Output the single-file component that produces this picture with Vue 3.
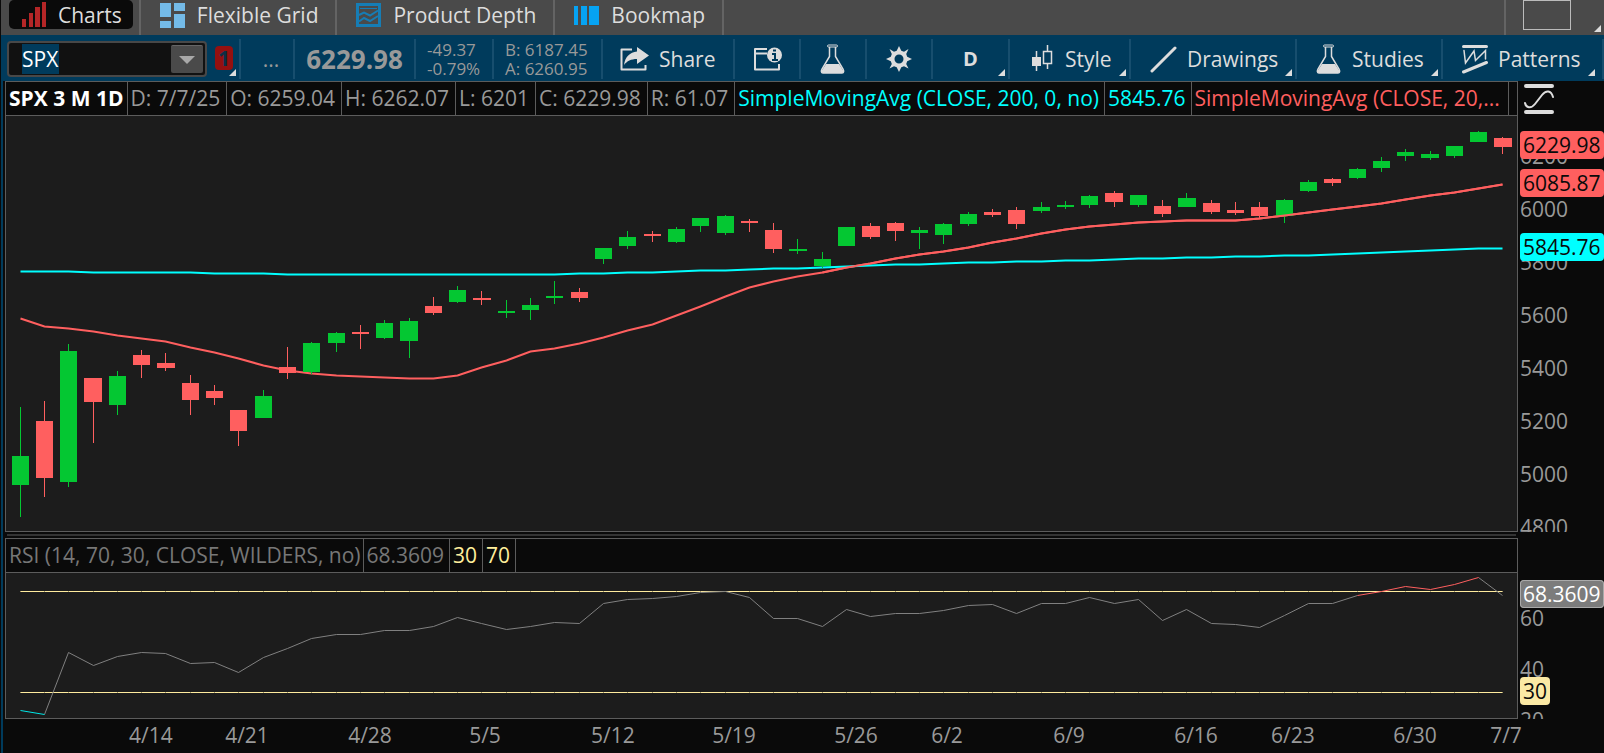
<script setup>
import { ref } from 'vue'

const symbol = ref('SPX')

const studies = [
  { text: 'SPX 3 M 1D', tone: 'title' },
  { text: 'D: 7/7/25', tone: 'muted' },
  { text: 'O: 6259.04', tone: 'muted' },
  { text: 'H: 6262.07', tone: 'muted' },
  { text: 'L: 6201', tone: 'muted' },
  { text: 'C: 6229.98', tone: 'muted' },
  { text: 'R: 61.07', tone: 'muted' },
  { text: 'SimpleMovingAvg (CLOSE, 200, 0, no)', tone: 'cyan' },
  { text: '5845.76', tone: 'cyan' },
  { text: 'SimpleMovingAvg (CLOSE, 20,...', tone: 'red' }
]
const rsiCells = [
  { text: 'RSI (14, 70, 30, CLOSE, WILDERS, no)', tone: 'dim name' },
  { text: '68.3609', tone: 'dim' },
  { text: '30', tone: 'sand' },
  { text: '70', tone: 'sand' }
]

// Plot areas in chart units
const W = 1511
const PRICE_H = 415
const RSI_H = 145
const PRICE_TOP = 116
const RSI_TOP = 573

const xReal = (i) => 14.1 + i * 24.309
const xMid = (i) => Math.floor(xReal(i)) + 0.5

// [direction, body top, body bottom, high, low]
const bars = [
  ['u', 456, 485, 407, 517], ['d', 421, 478, 401, 497], ['u', 351, 482, 344, 487], ['d', 378, 402, 378, 443],
  ['u', 376, 405, 371, 415], ['d', 355, 365, 350, 378], ['d', 363, 368, 353, 371], ['d', 383, 400, 375, 415],
  ['d', 391, 398, 385, 405], ['d', 410, 431, 410, 446], ['u', 396, 418, 390, 418], ['d', 367, 373, 347, 379],
  ['u', 343, 372, 342, 374], ['u', 333, 343, 332, 352], ['d', 332, 334, 325, 349], ['u', 323, 338, 320, 339],
  ['u', 321, 341, 318, 358], ['d', 306, 313, 297, 315], ['u', 290, 302, 286, 303], ['d', 298, 300, 291, 305],
  ['u', 311, 313, 300, 318], ['u', 305, 310, 298, 320], ['u', 296, 298, 281, 304], ['d', 292, 298, 288, 302],
  ['u', 248, 259, 248, 264], ['u', 237, 246, 231, 249], ['d', 234, 236, 231, 242], ['u', 229, 242, 227, 243],
  ['u', 218, 226, 218, 232], ['u', 216, 233, 215, 235], ['d', 221, 223, 219, 232], ['d', 230, 249, 223, 253],
  ['u', 249, 251, 239, 254], ['u', 259, 266, 252, 268], ['u', 227, 246, 227, 246], ['d', 226, 237, 223, 239],
  ['d', 223, 231, 222, 241], ['u', 230, 233, 227, 249], ['u', 224, 235, 223, 244], ['u', 214, 224, 212, 226],
  ['d', 212, 215, 209, 217], ['d', 210, 224, 207, 229], ['u', 207, 211, 202, 213], ['u', 205, 207, 201, 209],
  ['u', 196, 205, 195, 208], ['d', 193, 202, 191, 207], ['u', 195, 205, 195, 207], ['d', 206, 214, 200, 217],
  ['u', 198, 207, 193, 207], ['d', 203, 212, 200, 214], ['d', 210, 213, 202, 215], ['d', 207, 216, 202, 219],
  ['u', 200, 216, 199, 223], ['u', 182, 191, 180, 192], ['d', 179, 183, 178, 186], ['u', 169, 178, 168, 179],
  ['u', 161, 168, 157, 172], ['u', 152, 156, 149, 161], ['u', 154, 158, 151, 160], ['u', 146, 156, 146, 158],
  ['u', 132, 142, 131, 142], ['d', 138, 147, 137, 154]
]
const candles = bars.map(([dir, top, bottom, high, low], i) => {
  const left = Math.floor(xReal(i) - 8.06)
  return {
    dir,
    x: left,
    w: Math.floor(xReal(i) + 9.1) - left,
    wick: xMid(i) - 0.5,
    y: top - PRICE_TOP,
    h: bottom - top,
    wy: high - PRICE_TOP,
    wh: low - high
  }
})

const sma20 = [
  318, 326, 328, 331, 335, 338, 341, 347, 352, 358, 365, 370, 373, 375, 376, 377, 378, 378, 375, 367, 360, 351,
  348, 343, 337, 330, 324, 315, 306, 296, 287, 281, 276, 272, 267, 263, 258, 254, 251, 247, 242, 238, 233, 229,
  226, 224, 222, 221, 220, 220, 220, 218, 215, 212, 209, 206, 203, 199, 195, 192, 188, 184
]
const sma200 = [
  271, 271, 271, 272, 272, 272, 272, 272, 273, 273, 273, 274, 274, 274, 274, 274, 274, 274, 274, 274, 274, 274,
  274, 273, 273, 272, 272, 271, 270, 270, 269, 268, 268, 267, 266, 265, 264, 264, 263, 262, 262, 261, 261, 260,
  260, 259, 258, 258, 257, 257, 256, 256, 255, 255, 254, 253, 252, 251, 250, 249, 248, 248
]
const rsi = [
  710, 714, 652, 665, 656, 652, 653, 663, 662, 672, 657, 648, 638, 634, 634, 630, 630, 626, 617, 623, 629, 626,
  622, 623, 603, 599, 598, 596, 592, 591, 597, 618, 618, 626, 609, 616, 613, 613, 610, 605, 604, 613, 603, 603,
  597, 603, 599, 620, 609, 623, 624, 627, 615, 603, 603, 595, 591, 586, 589, 584, 577, 595
]
const line = (ys, top, from = 0, to = ys.length - 1) =>
  ys.slice(from, to + 1).map((y, k) => `${xMid(from + k)},${y + 0.5 - top}`).join(' ')

const lastX = xMid(61)
const notches = bars.map((_, i) => `M${xMid(i)} 18v1M${xMid(i)} 119v1`).join('')

const pct = (value, total) => `${(value / total) * 100}%`
const priceTicks = [
  ['6200', 156], ['6000', 209], ['5800', 262], ['5600', 315], ['5400', 368], ['5200', 421], ['5000', 474], ['4800', 527]
].map(([text, y]) => ({ text, top: pct(y - 81, 451) }))
const priceTags = [
  ['6229.98', 145, 'red'], ['6085.87', 183, 'red'], ['5845.76', 247, 'cyan']
].map(([text, y, tone]) => ({ text, tone, top: pct(y - 81, 451) }))
const rsiTicks = [['60', 618], ['40', 669], ['20', 720]].map(([text, y]) => ({ text, top: pct(y - 538, 181) }))
const rsiTags = [['68.3609', 594, 'gray'], ['30', 691, 'sand']].map(([text, y, tone]) => ({
  text, tone, top: pct(y - 538, 181)
}))
const dates = [
  ['4/14', 151], ['4/21', 247], ['4/28', 370], ['5/5', 485], ['5/12', 613], ['5/19', 734], ['5/26', 856],
  ['6/2', 947], ['6/9', 1069], ['6/16', 1196], ['6/23', 1293], ['6/30', 1415], ['7/7', 1506]
].map(([text, x]) => ({ text, left: pct(x - 6, W) }))
</script>

<template>
  <div class="app">
    <nav class="tabs">
      <div class="tab-slot first">
        <button class="tab active" type="button">
          <svg width="24" height="25" viewBox="0 0 24 25" aria-hidden="true">
            <path d="M0 17h4v8H0zM7 11h4v14H7zM13 5h5v20h-5zM20 0h4v25h-4z" fill="#b52627" />
          </svg>
          Charts
        </button>
      </div>
      <div class="tab-slot">
        <button class="tab" type="button">
          <svg width="25" height="25" viewBox="0 0 25 25" aria-hidden="true">
            <path d="M0 0h11v14H0zM0 18h11v7H0zM14 0h11v8H14zM14 11h11v14H14z" fill="#74bbe8" />
          </svg>
          Flexible Grid
        </button>
      </div>
      <div class="tab-slot">
        <button class="tab" type="button">
          <svg width="25" height="24" viewBox="0 0 25 24" fill="none" stroke="#167db5" aria-hidden="true">
            <rect x="1.5" y="1.5" width="22" height="21" stroke-width="3" />
            <path d="M4 5.5h17" stroke-width="1" />
            <path d="M3 12l5-2.5 6 3 8-5M3 18.500l5-3.500 6 3 8-5" stroke-width="2" />
          </svg>
          Product Depth
        </button>
      </div>
      <div class="tab-slot">
        <button class="tab" type="button">
          <svg width="25" height="19" viewBox="0 0 25 19" aria-hidden="true">
            <path d="M0 0h4v19H0zM7 0h6v19H7zM15 0h10v19H15z" fill="#06a3f3" />
          </svg>
          Bookmap
        </button>
      </div>
      <div class="tab-tools">
        <button class="swatch" type="button" aria-label="Layout"></button>
        <i class="corner"></i>
      </div>
    </nav>

    <div class="toolbar">
      <div class="cell symbol-cell">
        <div class="combo">
          <input v-model="symbol" class="symbol" type="text" aria-label="Symbol" />
          <button class="drop" type="button" aria-label="Choose symbol">
            <svg width="16" height="8" viewBox="0 0 16 8"><path d="M0 0h16l-8 8z" fill="#a8a8a8" /></svg>
          </button>
        </div>
        <button class="badge" type="button">1</button>
        <i class="corner"></i>
      </div>
      <div class="cell center dots">...</div>
      <div class="cell center price">6229.98</div>
      <div class="cell center pair"><span>-49.37</span><span>-0.79%</span></div>
      <div class="cell center pair"><span>B: 6187.45</span><span>A: 6260.95</span></div>
      <button class="cell tool share" type="button">
        <svg width="29" height="24" viewBox="0 0 29 24" aria-hidden="true">
          <path d="M12 2.500H1.500v20h24V18" fill="none" stroke="#ddd" stroke-width="2" stroke-linejoin="round" />
          <path d="M17 0l12 8.500L17 17v-5C11 12 7 14 4 18c1-8 6-13 13-13.500z" fill="#ddd" />
        </svg>
        Share
      </button>
      <button class="cell tool" type="button" aria-label="Chart info">
        <svg width="28" height="24" viewBox="0 0 28 24" fill="none" stroke="#ddd" stroke-width="2" aria-hidden="true">
          <path d="M13 2H1v20.500h24V17M1 6.500h12" stroke-linejoin="round" />
          <circle cx="20.500" cy="8" r="7.500" fill="#ddd" stroke="none" />
          <path d="M18 7h3v6M18 13h6" stroke="#003b5c" />
          <path d="M19 3.500h3" stroke="#003b5c" stroke-width="2" />
        </svg>
      </button>
      <button class="cell tool" type="button" aria-label="Edit studies">
        <svg width="26" height="30" viewBox="0 0 26 30" aria-hidden="true">
          <rect x="7.500" y="1" width="10" height="2" rx="1" fill="none" stroke="#ddd" />
          <path d="M9.500 3v9.500L2 25c-1 2-1 4 1 4h19c2 0 2-2 1-4l-7.500-12.500V3" fill="none" stroke="#ddd" stroke-width="1.500" />
          <path d="M6 20h13l4.500 7c.5 1 0 2-1.500 2H3c-1.500 0-2-1-1.500-2z" fill="#ddd" />
        </svg>
      </button>
      <button class="cell tool" type="button" aria-label="Settings">
        <svg width="26" height="26" viewBox="0 0 26 26" aria-hidden="true">
          <path fill="#ddd" fill-rule="evenodd" d="M13 0l2.300 4.800 2.700 1L22.500 3l-2.300 5 1 2.700L26 13l-4.800 2.300-1 2.700 2.300 4.500-4.500-2.300-2.700 1L13 26l-2.300-4.800-2.700-1-4.500 2.300L5.800 18l-1-2.700L0 13l4.800-2.300 1-2.700L3.500 3 8 5.800l2.700-1zM13 8.500a4.500 4.500 0 1 0 0 9 4.500 4.500 0 0 0 0-9z" />
        </svg>
      </button>
      <button class="cell center period" type="button">D<i class="corner"></i></button>
      <button class="cell tool" type="button">
        <svg width="26" height="28" viewBox="0 0 26 28" aria-hidden="true">
          <path d="M7.500 6v20M18.500 0v6M18.500 19v5" stroke="#ddd" stroke-width="1.500" />
          <rect x="3" y="12" width="9" height="9" fill="#ddd" />
          <rect x="14.500" y="6.500" width="8" height="12" fill="none" stroke="#ddd" stroke-width="1.500" />
        </svg>
        Style<i class="corner"></i>
      </button>
      <button class="cell tool" type="button">
        <svg width="27" height="27" viewBox="0 0 27 27" aria-hidden="true">
          <path d="M2 25L25 2" stroke="#ddd" stroke-width="3" stroke-linecap="round" />
        </svg>
        Drawings<i class="corner"></i>
      </button>
      <button class="cell tool" type="button">
        <svg width="26" height="30" viewBox="0 0 26 30" aria-hidden="true">
          <rect x="7.500" y="1" width="10" height="2" rx="1" fill="none" stroke="#ddd" />
          <path d="M9.500 3v9.500L2 25c-1 2-1 4 1 4h19c2 0 2-2 1-4l-7.500-12.500V3" fill="none" stroke="#ddd" stroke-width="1.500" />
          <path d="M6 20h13l4.500 7c.5 1 0 2-1.500 2H3c-1.500 0-2-1-1.500-2z" fill="#ddd" />
        </svg>
        Studies<i class="corner"></i>
      </button>
      <button class="cell tool last" type="button">
        <svg width="26" height="30" viewBox="0 0 26 30" fill="none" stroke="#ddd" stroke-linecap="round" aria-hidden="true">
          <path d="M1.500 2.500h23M1.500 28L24.500 18.500" stroke-width="3" />
          <path d="M2 6.500l1.500 12.500L12 7l1.500 9.500L23.500 6.500v8.500" stroke-width="1.500" />
        </svg>
        Patterns<i class="corner"></i>
      </button>
    </div>

    <main class="workspace">
      <section class="panel price-panel">
        <div class="frame">
          <header class="legend">
            <span v-for="(c, i) in studies" :key="i" :class="['legend-cell', c.tone]">{{ c.text }}</span>
          </header>
          <div class="plot">
            <svg :viewBox="`0 0 ${W} ${PRICE_H}`" preserveAspectRatio="none" role="img" aria-label="SPX daily candles">
              <polyline :points="line(sma20, PRICE_TOP)" fill="none" stroke="#ff5f5f" stroke-width="2" />
              <polyline :points="line(sma200, PRICE_TOP)" fill="none" stroke="#00ffff" stroke-width="2" />
              <g v-for="(c, i) in candles" :key="i" :class="c.dir" shape-rendering="crispEdges">
                <rect :x="c.wick" :y="c.wy" width="1" :height="c.wh" />
                <rect :x="c.x" :y="c.y" :width="c.w" :height="c.h" />
              </g>
              <polyline :points="line(sma20, PRICE_TOP, 33, 61)" fill="none" stroke="#ff5f5f" stroke-width="2" />
            </svg>
          </div>
        </div>
        <aside class="axis">
          <button class="scale" type="button" aria-label="Axis settings">
            <svg width="30" height="30" viewBox="0 0 30 30" fill="none" stroke="#ddd" stroke-linecap="round">
              <path d="M2 2h26M2 28h26" stroke-width="4" />
              <path d="M1 19c1 5 6 6 10 1l7-9c4-5 9-5 11 2" stroke-width="2" />
            </svg>
          </button>
          <span v-for="t in priceTicks" :key="t.text" class="tick" :style="{ top: t.top }">{{ t.text }}</span>
          <span v-for="t in priceTags" :key="t.text" :class="['tag', t.tone]" :style="{ top: t.top }">{{ t.text }}</span>
        </aside>
      </section>

      <div class="splitter"></div>

      <section class="panel rsi-panel">
        <div class="frame">
          <header class="legend">
            <span v-for="(c, i) in rsiCells" :key="i" :class="['legend-cell', c.tone]">{{ c.text }}</span>
          </header>
          <div class="plot">
            <svg :viewBox="`0 0 ${W} ${RSI_H}`" preserveAspectRatio="none" fill="none" role="img" aria-label="RSI">
              <path :d="`M14 18.500H${lastX}M14 119.500H${lastX}`" stroke="#ffec9e" />
              <path :d="notches" stroke="#a89c6c" />
              <polyline :points="line(rsi, RSI_TOP, 1, 55)" stroke="#808080" />
              <polyline :points="line(rsi, RSI_TOP, 60, 61)" stroke="#808080" />
              <polyline :points="line(rsi, RSI_TOP, 0, 1)" stroke="#00e5e5" />
              <polyline :points="line(rsi, RSI_TOP, 55, 60)" stroke="#ff5f5f" />
            </svg>
          </div>
        </div>
        <aside class="axis">
          <span v-for="t in rsiTicks" :key="t.text" class="tick" :style="{ top: t.top }">{{ t.text }}</span>
          <span v-for="t in rsiTags" :key="t.text" :class="['tag', t.tone]" :style="{ top: t.top }">{{ t.text }}</span>
        </aside>
      </section>

      <footer class="dates">
        <div class="date-track">
          <span v-for="d in dates" :key="d.text" class="date" :style="{ left: d.left }">{{ d.text }}</span>
        </div>
      </footer>
    </main>
  </div>
</template>

<style>
body {
  background: #0a0a0a;
}
</style>

<style scoped>
.app {
  display: flex;
  flex-direction: column;
  min-height: 100vh;
  box-sizing: border-box;
  padding-left: 1px;
  background: #0a0a0a;
  color: #999;
  font: 21px/28px "Open Sans", "Noto Sans", sans-serif;
  overflow: hidden;
}
.app *,
.app *::before {
  box-sizing: border-box;
}
button,
input {
  margin: 0;
  padding: 0;
  border: 0;
  background: none;
  color: inherit;
  font: inherit;
}
svg {
  display: block;
  flex: none;
}
.tabs {
  display: flex;
  height: 35px;
  background: #4a4a4a;
  color: #ddd;
}
.tab-slot {
  border-right: 2px solid #646464;
}
.tab-slot.first {
  padding: 0 6px 0 8px;
}
.tab {
  display: flex;
  align-items: center;
  gap: 12px;
  height: 30px;
  padding: 0 17px 0 19px;
  white-space: nowrap;
}
.tab.active {
  height: 29px;
  padding: 0 11px 0 13px;
  border-radius: 5px;
  background: #0a0a0a;
}
.tab-tools {
  position: relative;
  width: 100px;
  margin-left: auto;
  padding-left: 17px;
  border-left: 2px solid #646464;
}
.swatch {
  display: block;
  width: 48px;
  height: 30px;
  border: 1px solid #bbb;
}
.corner {
  position: absolute;
  right: 3px;
  bottom: 5px;
  border-left: 7px solid transparent;
  border-bottom: 7px solid #ddd;
}
.tab-tools .corner {
  bottom: 3px;
}
.toolbar {
  display: grid;
  grid-template-columns: 240fr 54fr 121fr 78fr 109fr 132fr 66fr 66fr 66fr 77fr 121fr 166fr 146fr 161fr;
  height: 46px;
  padding: 4px 0 2px;
  background: #003b5c;
  color: #ddd;
}
.cell {
  position: relative;
  display: flex;
  align-items: center;
  min-width: 0;
  border-right: 2px solid #174e6e;
  white-space: nowrap;
}
.cell .corner {
  bottom: 3px;
}
.cell.last .corner {
  right: 7px;
}
.center {
  justify-content: center;
}
.symbol-cell {
  gap: 8px;
  padding-left: 6px;
}
.combo {
  display: flex;
  align-items: center;
  flex: 1;
  height: 36px;
  padding: 0 2px 0 13px;
  border: 2px solid #484848;
  border-radius: 4px;
  background: #111;
}
.symbol {
  width: 37px;
  height: 30px;
  margin-right: auto;
  background: #003b5c;
  color: #fff;
}
.drop {
  display: flex;
  align-items: center;
  justify-content: center;
  width: 32px;
  height: 28px;
  border-radius: 2px;
  border-top: 1px solid #666;
  background: #4a4a4a;
}
.badge {
  width: 18px;
  height: 24px;
  margin: 0 6px 2px 0;
  border-radius: 4px;
  background: #941010;
  color: #0d2e45;
  font-weight: 700;
  line-height: 24px;
}
.dots {
  padding-left: 8px;
  color: #999;
}
.price {
  color: #999;
  font-size: 26px;
  font-weight: 700;
}
.pair {
  flex-direction: column;
  align-items: flex-start;
  padding-left: 11px;
  color: #999;
  font-size: 17px;
  line-height: 19px;
}
.tool {
  gap: 10px;
  padding-left: 19px;
}
.share {
  padding-left: 17px;
}
.period {
  font-size: 20px;
  font-weight: 700;
}
.workspace {
  display: flex;
  flex: 1;
  flex-direction: column;
  padding-left: 2px;
  border-left: 2px solid #003b5c;
}
.panel {
  display: grid;
  grid-template-columns: minmax(0, 1fr) 86px;
}
.price-panel {
  flex: 451 1 0;
}
.rsi-panel {
  flex: 181 1 0;
}
.frame {
  display: flex;
  flex-direction: column;
  min-height: 120px;
  border: 1px solid #5c5c5c;
}
.legend {
  display: flex;
  height: 34px;
  border-bottom: 1px solid #5c5c5c;
  background: #0a0a0a;
  line-height: 32px;
}
.legend-cell {
  padding: 0 5px 0 3px;
  border-right: 1px solid #5c5c5c;
  white-space: nowrap;
}
.legend .title {
  padding-right: 3px;
  color: #fff;
  font-weight: 700;
}
.legend .muted { padding-right: 6px; }
.dim { color: #777; }
.legend .name { padding-right: 2px; }
.legend .cyan { color: #00ffff; }
.legend .red {
  padding-right: 8px;
  color: #ff5f5f;
}
.legend .sand { color: #ffee9c; }
.plot {
  position: relative;
  flex: 1;
  background: #1c1c1c;
}
.plot svg {
  position: absolute;
  inset: 0;
  width: 100%;
  height: 100%;
}
.u { fill: #04c732; }
.d { fill: #ff5f5f; }
.axis {
  position: relative;
  overflow: hidden;
}
.scale {
  margin: 3px 0 0 6px;
}
.tick,
.tag {
  position: absolute;
  left: 2px;
  transform: translateY(-50%);
}
.tag {
  padding: 0 3px;
  border-radius: 4px;
  color: #0a0a0a;
}
.tag.red { background: #ff5f5f; }
.tag.cyan { background: #00ffff; }
.tag.sand { background: #fbe9a4; }
.tag.gray {
  background: #7c7c7c;
  box-shadow: inset 0 0 0 1px #aaa;
  color: #fff;
}
.splitter {
  height: 6px;
  padding: 2px 88px 2px 2px;
}
.splitter::before {
  content: "";
  display: block;
  height: 2px;
  background: #333;
}
.dates {
  height: 34px;
  padding: 0 87px 0 1px;
}
.date-track {
  position: relative;
  height: 100%;
}
.date {
  position: absolute;
  top: 2px;
  transform: translateX(-50%);
}
</style>
